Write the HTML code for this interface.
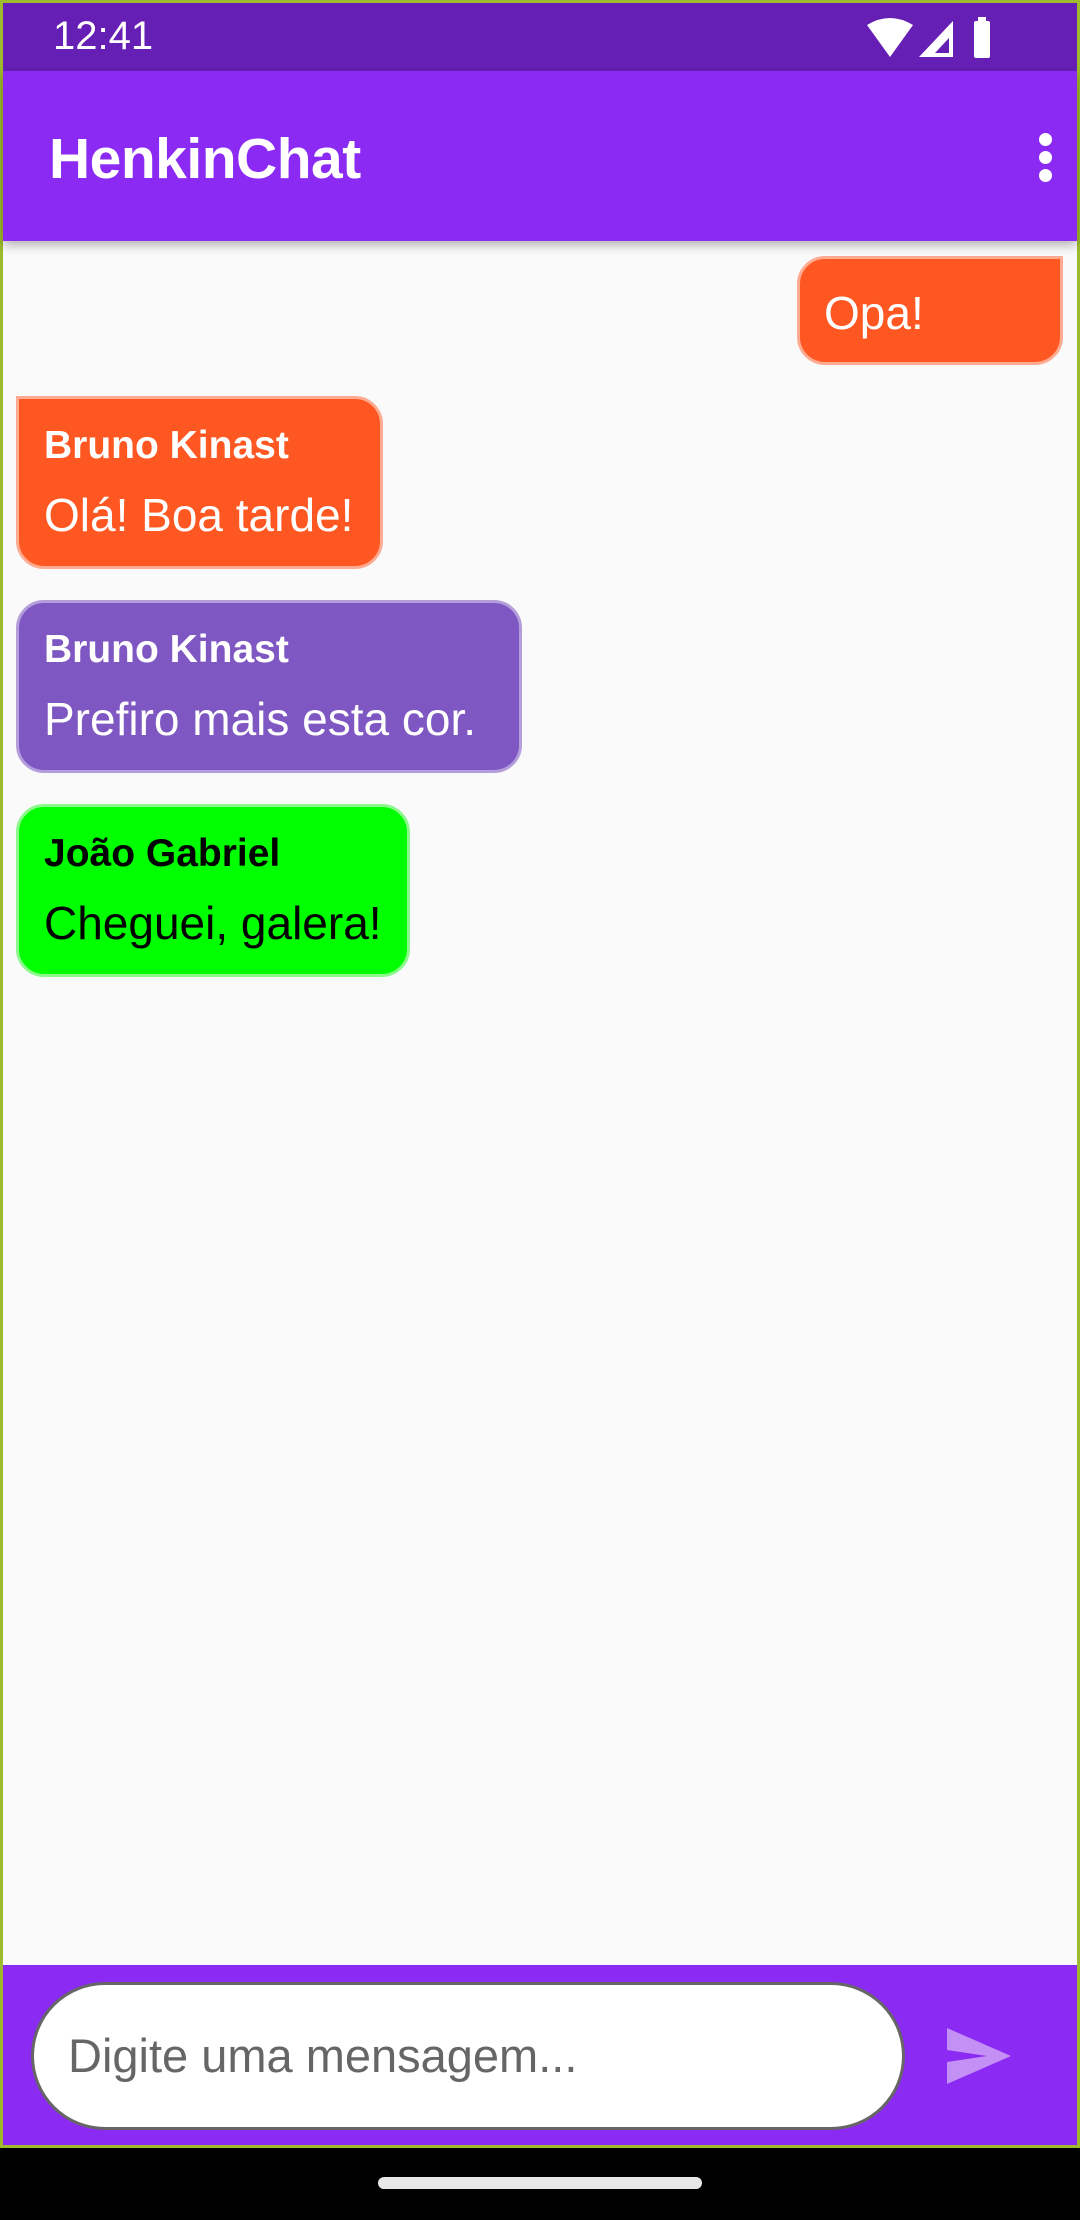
<!DOCTYPE html>
<html><head><meta charset="utf-8"><style>
*{margin:0;padding:0;box-sizing:border-box}
html,body{width:1080px;height:2220px;overflow:hidden;background:#000;font-family:"Liberation Sans",sans-serif}
#frame{position:absolute;left:0;top:0;width:1080px;height:2148px;background:#fafafa;border:3px solid #9dbb2c}
#status{position:absolute;left:3px;top:3px;width:1074px;height:68px;background:#651fb5;color:#fff}
#status .t{position:absolute;left:50px;top:11px;font-size:40px}
#appbar{position:absolute;left:3px;top:71px;width:1074px;height:170px;background:#8a2af2;box-shadow:0 4px 10px rgba(0,0,0,.3)}
#appbar .title{position:absolute;left:46px;top:55px;font-size:57px;color:#fff;font-weight:bold;letter-spacing:-0.5px}
.dot{position:absolute;left:1036px;width:13px;height:13px;border-radius:50%;background:#fff}
.b{position:absolute;border-radius:28px;border:3px solid}
.b .n{position:absolute;left:25px;top:25px;font-size:39px;font-weight:bold;white-space:nowrap}
.b .m{position:absolute;left:25px;top:89px;font-size:46px;white-space:nowrap}
#bottom{position:absolute;left:3px;top:1965px;width:1074px;height:180px;background:#8a2af2}
#input{position:absolute;left:31px;top:1982px;width:874px;height:148px;border-radius:74px;background:#fff;border:3px solid #666}
#input span{position:absolute;left:34px;top:43px;font-size:47px;color:#666}
#handle{position:absolute;left:378px;top:2177px;width:324px;height:12px;border-radius:6px;background:#e8e8e8}
</style></head><body>
<div id="frame"></div>
<div id="status"><span class="t">12:41</span>
<svg style="position:absolute;left:862px;top:14px" width="130" height="42" viewBox="0 0 130 42">
<path d="M2 8 Q25 -6 48 8 L25 40 Z" fill="#fff"/>
<path d="M54 40 L88 4 L88 40 Z" fill="#fff"/><path d="M70 36 L84 21 L84 36 Z" fill="#651fb5"/>
<rect x="109" y="4" width="16" height="37" rx="2" fill="#fff"/><rect x="113" y="0" width="8" height="5" fill="#fff"/>
</svg></div>
<div id="appbar"><span class="title">HenkinChat</span>
<div class="dot" style="top:62px"></div><div class="dot" style="top:80px"></div><div class="dot" style="top:98px"></div></div>

<div class="b" style="left:797px;top:256px;width:266px;height:109px;background:#ff5722;border-color:#ffab91;border-top-right-radius:0;color:#fff"><span class="m" style="top:27px;left:24px">Opa!</span></div>
<div class="b" style="left:16px;top:396px;width:367px;height:173px;background:#ff5722;border-color:#ffab91;border-top-left-radius:0;color:#fff"><span class="n">Bruno Kinast</span><span class="m">Olá! Boa tarde!</span></div>
<div class="b" style="left:16px;top:600px;width:506px;height:173px;background:#7e57c2;border-color:#b39ddb;color:#fff"><span class="n">Bruno Kinast</span><span class="m">Prefiro mais esta cor.</span></div>
<div class="b" style="left:16px;top:804px;width:394px;height:173px;background:#00ff00;border-color:#8cf88c;color:#000"><span class="n">João Gabriel</span><span class="m">Cheguei, galera!</span></div>

<div id="bottom"></div>
<div id="input"><span>Digite uma mensagem...</span></div>
<svg style="position:absolute;left:947px;top:2028px" width="64" height="56" viewBox="0 0 64 56"><path d="M0 0 L64 28 L0 56 L0 34 L40 28 L0 22 Z" fill="#c490f5"/></svg>
<div id="handle"></div>
</body></html>
